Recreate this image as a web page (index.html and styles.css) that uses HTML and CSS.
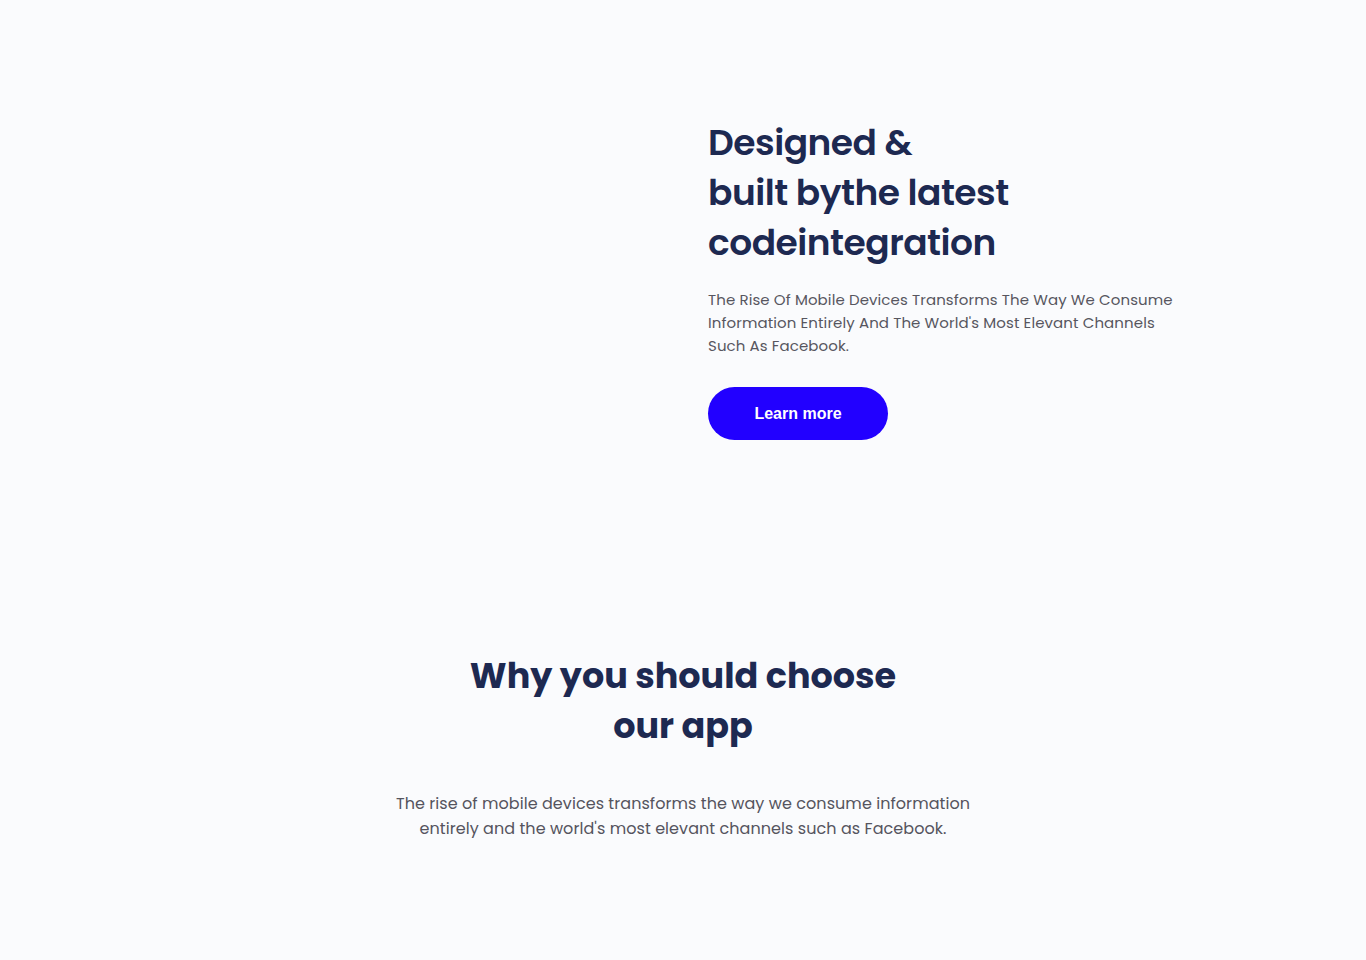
FILE: index.html
```html
<!DOCTYPE html>
<html lang="en">
<head>
<meta charset="utf-8">
<title>App</title>
<link rel="stylesheet" href="styles.css">
</head>
<body>
  <section class="hero">
    <div class="hero-media"></div>
    <div class="hero-text">
      <h1 class="hero-title">Designed &amp;<br>built bythe latest<br>codeintegration</h1>
      <p class="hero-desc">The Rise Of Mobile Devices Transforms The Way We Consume Information Entirely And The World's Most Elevant Channels Such As Facebook.</p>
      <a class="btn" href="#">Learn more</a>
    </div>
  </section>
  <section class="why">
    <h2 class="why-title">Why you should choose<br>our app</h2>
    <p class="why-desc">The rise of mobile devices transforms the way we consume information<br>entirely and the world's most elevant channels such as Facebook.</p>
  </section>
</body>
</html>
```

FILE: styles.css
```css
* { box-sizing: border-box; }
html, body { margin: 0; padding: 0; }
body {
  background: #fafbfd;
  font-family: "Poppins", "Open Sans", "Noto Sans", sans-serif;
  color: #1d2951;
  min-height: 960px;
}
.hero {
  width: 1200px;
  margin: 0 auto;
  display: grid;
  grid-template-columns: 600px 600px;
  padding-top: 118px;
}
.hero-text {
  padding-left: 25px;
}
.hero-title {
  margin: 0;
  font-size: 36px;
  line-height: 50px;
  font-weight: 600;
  letter-spacing: -0.5px;
  color: #1d2951;
}
.hero-desc {
  margin: 20px 0 0;
  width: 472px;
  font-size: 15px;
  line-height: 23px;
  letter-spacing: 0.1px;
  color: #57565f;
}
.btn {
  display: inline-flex;
  align-items: center;
  justify-content: center;
  margin-top: 30px;
  width: 180px;
  height: 53px;
  border-radius: 27px;
  background: #2200ff;
  color: #fff;
  font-family: "Liberation Sans", Arial, sans-serif;
  font-weight: 700;
  font-size: 16px;
  text-decoration: none;
}
.why {
  text-align: center;
  padding-top: 211px;
}
.why-title {
  margin: 0;
  font-size: 35px;
  line-height: 50px;
  font-weight: 700;
  color: #1d2951;
}
.why-desc {
  margin: 40px 0 0;
  font-size: 16px;
  line-height: 25px;
  letter-spacing: 0.06px;
  color: #55545e;
}
```
